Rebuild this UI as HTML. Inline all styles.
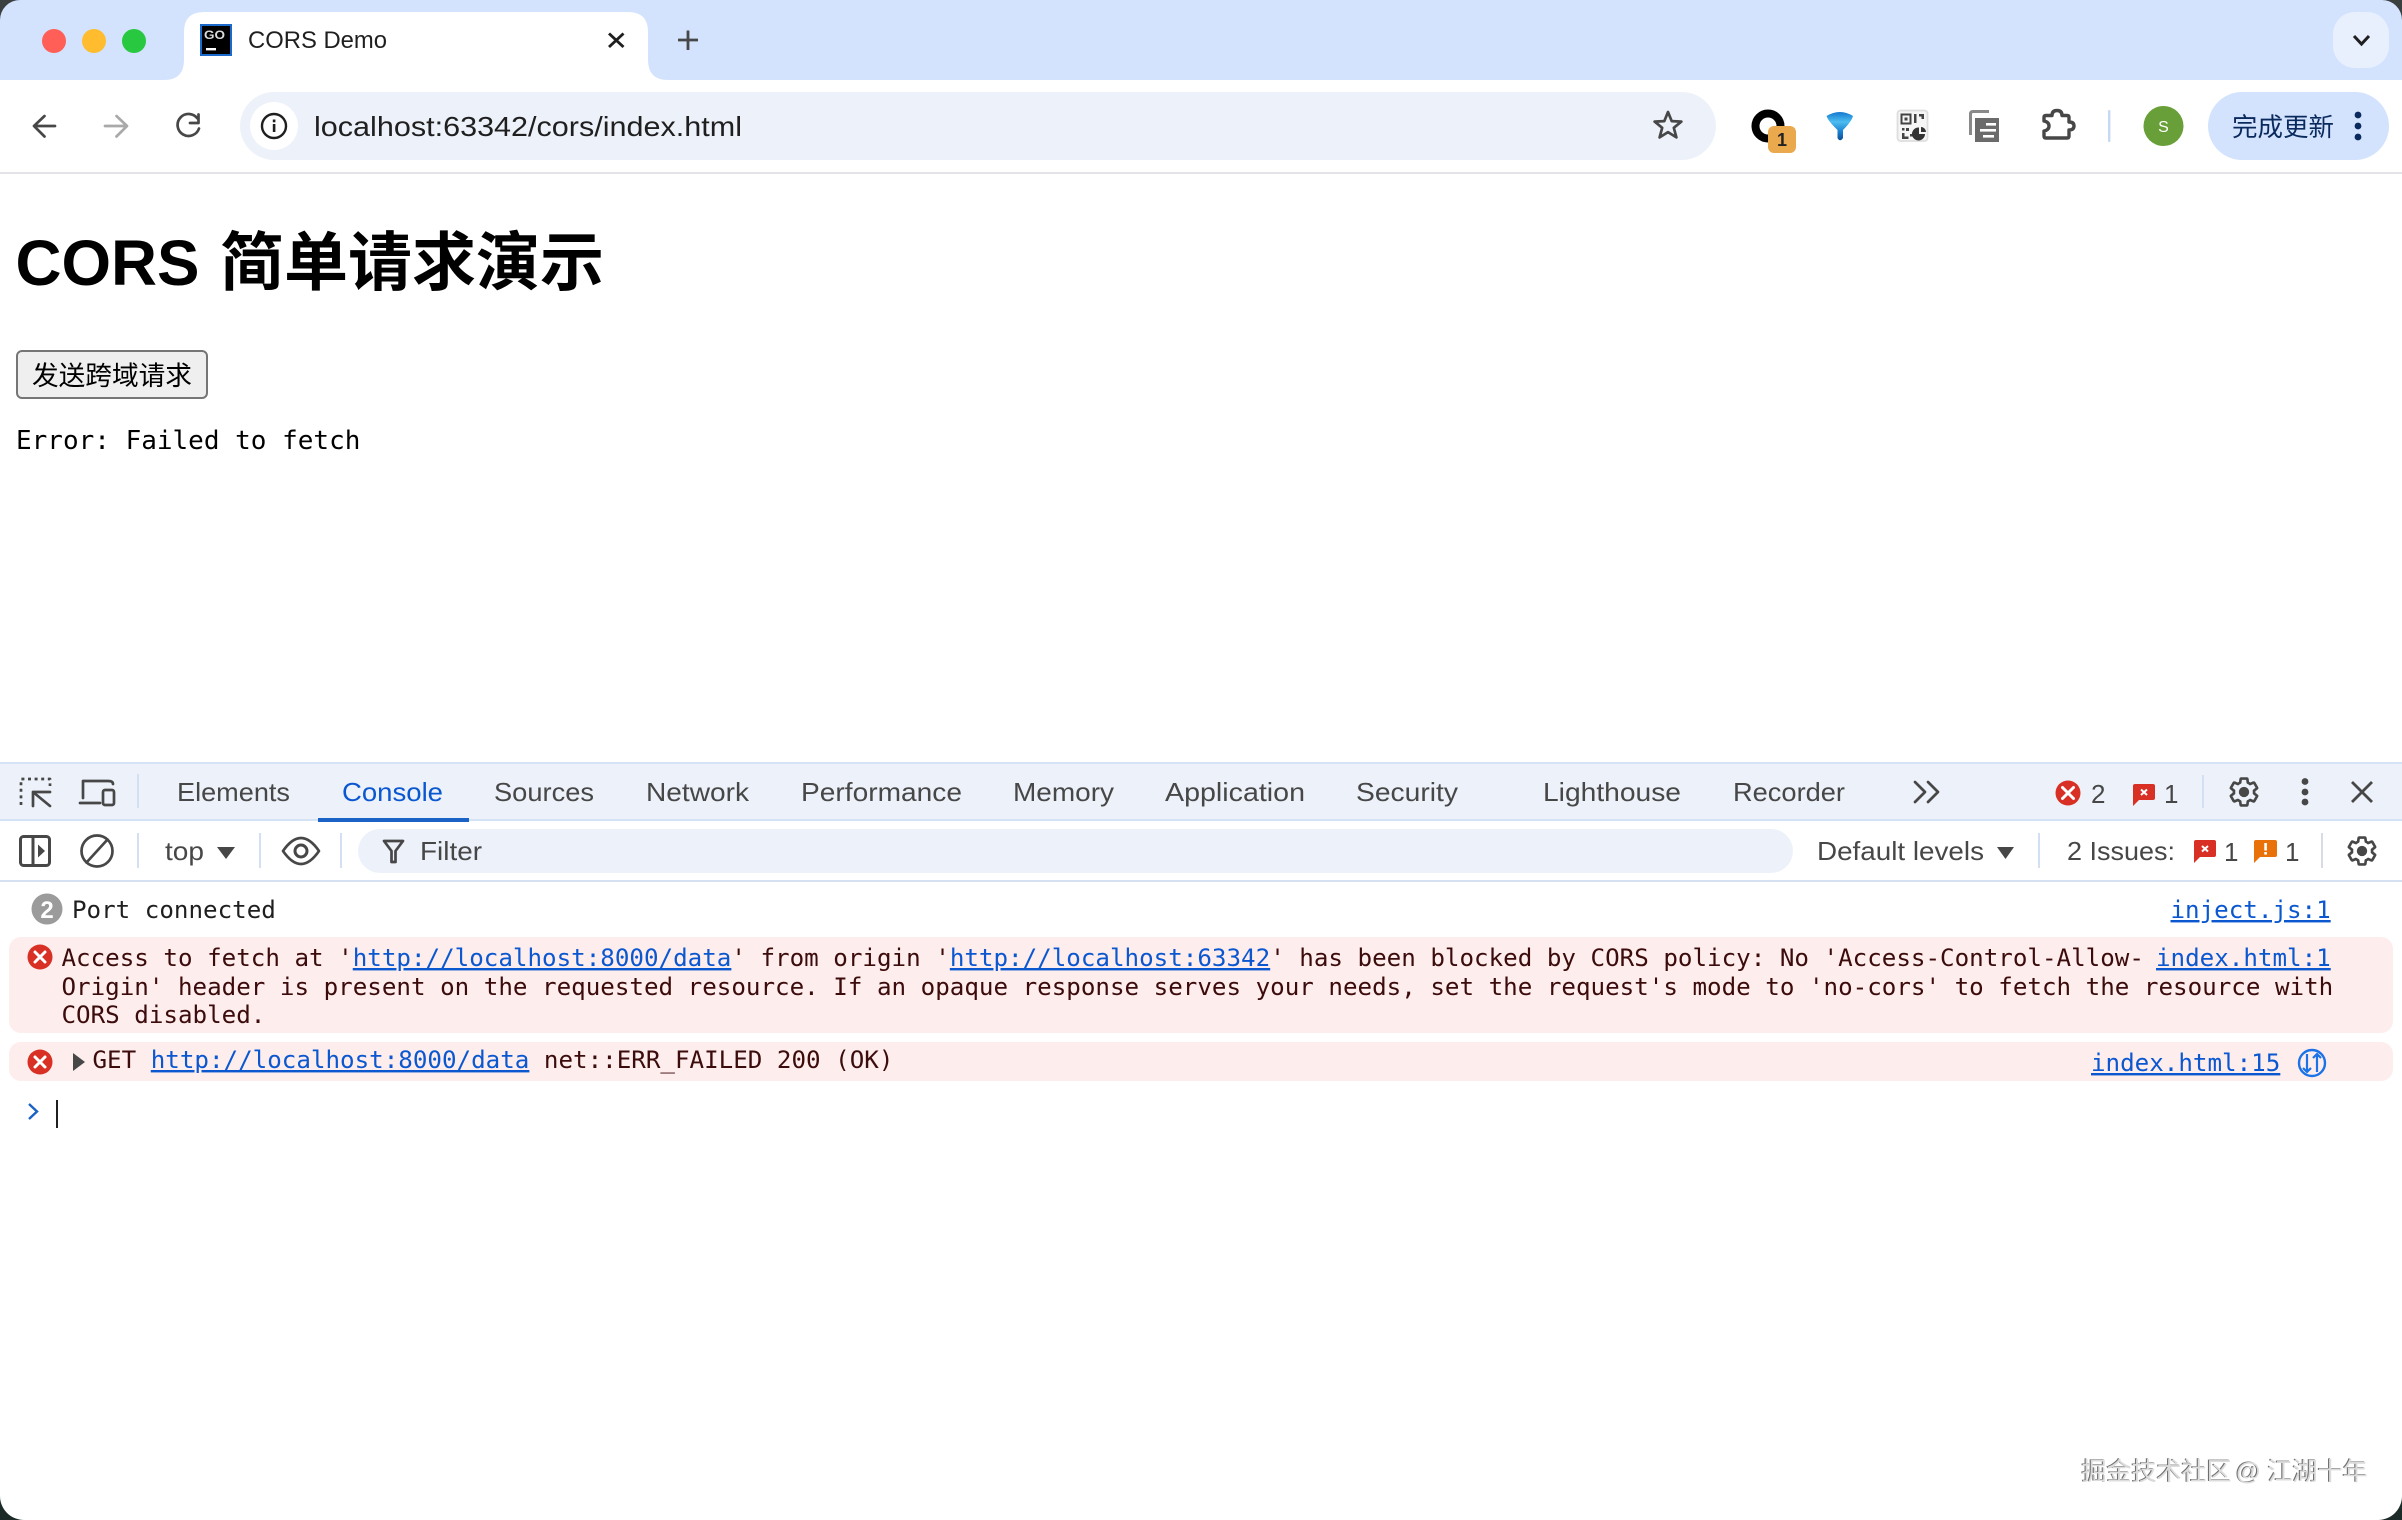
<!DOCTYPE html>
<html lang="zh">
<head>
<meta charset="utf-8">
<title>CORS Demo</title>
<style>
html,body{margin:0;padding:0;background:#fff;width:2402px;height:1520px;overflow:hidden}
svg{display:block}
text{font-family:"Liberation Sans","Noto Sans CJK SC",sans-serif}
.t{font-size:26px;fill:#474747}
.m{font-family:"DejaVu Sans Mono","Liberation Mono",monospace;font-size:24.2px;fill:#1f1f1f}
.e{fill:#3c0b0b}
.l{fill:#0b57d0;text-decoration:underline}
.s{fill:none;stroke:#474747;stroke-width:2.7;stroke-linecap:round;stroke-linejoin:round}
.sep{fill:#d3e0f3}
</style>
</head>
<body>
<svg xmlns="http://www.w3.org/2000/svg" width="2402" height="1520" viewBox="0 0 2402 1520">
<defs>
<g id="gear"><path fill="none" stroke="#474747" stroke-width="1.9" stroke-linejoin="round" d="M19.14 12.94c.04-.3.06-.61.06-.94 0-.32-.02-.64-.07-.94l2.03-1.58a.49.49 0 0 0 .12-.61l-1.92-3.32a.488.488 0 0 0-.59-.22l-2.39.96c-.5-.38-1.03-.7-1.62-.94l-.36-2.54a.484.484 0 0 0-.48-.41h-3.84c-.24 0-.43.17-.47.41l-.36 2.54c-.59.24-1.13.57-1.62.94l-2.39-.96c-.22-.08-.47 0-.59.22L2.74 8.87c-.12.21-.08.47.12.61l2.03 1.58c-.05.3-.09.63-.09.94s.02.64.07.94l-2.03 1.58a.49.49 0 0 0-.12.61l1.92 3.32c.12.22.37.29.59.22l2.39-.96c.5.38 1.03.7 1.62.94l.36 2.54c.05.24.24.41.48.41h3.84c.24 0 .44-.17.47-.41l.36-2.54c.59-.24 1.13-.56 1.62-.94l2.39.96c.22.08.47 0 .59-.22l1.92-3.32c.12-.22.07-.47-.12-.61l-2.01-1.58z"/><circle cx="12" cy="12" r="3.7" fill="#474747"/></g>
<linearGradient id="fn" x1="0" y1="0" x2="0" y2="1"><stop offset="0" stop-color="#1579cf"/><stop offset=".35" stop-color="#4dbdf0"/><stop offset=".7" stop-color="#1a7fd0"/><stop offset="1" stop-color="#0d4f94"/></linearGradient>
</defs>

<!-- Tab strip -->
<rect width="2402" height="80" fill="#d3e3fd"/>
<circle cx="54" cy="41" r="12" fill="#ff5f57"/>
<circle cx="94" cy="41" r="12" fill="#febc2e"/>
<circle cx="134" cy="41" r="12" fill="#28c840"/>

<!-- Toolbar -->
<path d="M0 94Q0 80 14 80H2388Q2402 80 2402 94V172H0Z" fill="#fff"/>
<rect y="172" width="2402" height="2" fill="#e3e4e7"/>

<!-- Active tab -->
<path d="M164 80Q184 80 184 60V32Q184 12 204 12H628Q648 12 648 32V60Q648 80 668 80Z" fill="#fff"/>
<rect x="201" y="25" width="30" height="30" fill="#000" stroke="#1b6ac9" stroke-width="2"/>
<text x="204" y="39" font-size="12" font-weight="700" fill="#ddd" textLength="21" lengthAdjust="spacingAndGlyphs">GO</text>
<rect x="206" y="48" width="10" height="2.4" fill="#fff"/>
<text x="248" y="48" font-size="24" fill="#1f1f1f" textLength="139" lengthAdjust="spacingAndGlyphs">CORS Demo</text>
<path d="M609 33.5L623.5 47M623.5 33.5L609 47" fill="none" stroke="#1f1f1f" stroke-width="2.9"/>
<path d="M688 30.5V50M678 40H698" fill="none" stroke="#474747" stroke-width="2.8"/>

<!-- Tab search chevron -->
<rect x="2333" y="12" width="56" height="56" rx="22" fill="#e8f0fd"/>
<path d="M2354 36L2361.5 44L2369 36" fill="none" stroke="#1f1f1f" stroke-width="3"/>

<!-- Nav buttons -->
<path class="s" d="M55 126H35M44.5 116L34 126L44.5 136.5"/>
<path class="s" style="stroke:#a9a9a9" d="M105 126H126M116.5 116L127 126L116.5 136.5"/>
<path class="s" d="M197.5 118.5A11 11 0 1 0 199 128.5M198.5 114.5V123H190"/>

<!-- Omnibox -->
<rect x="240" y="92" width="1476" height="68" rx="34" fill="#edf2fa"/>
<circle cx="274" cy="126" r="24" fill="#fff"/>
<circle cx="274" cy="126" r="12" fill="none" stroke="#1f1f1f" stroke-width="2.4"/>
<rect x="272.8" y="124" width="2.6" height="8" fill="#1f1f1f"/><rect x="272.8" y="119.5" width="2.6" height="2.8" fill="#1f1f1f"/>
<text x="314" y="136" font-size="28" fill="#1f1f1f" textLength="428" lengthAdjust="spacingAndGlyphs">localhost:63342/cors/index.html</text>
<path class="s" transform="translate(1668 126)" d="M0-14L3.7-4.9L13.4-4.4L5.8 1.8L8.4 11.4L0 6.1L-8.4 11.4L-5.8 1.8L-13.4-4.4L-3.7-4.9Z"/>

<!-- Extensions -->
<circle cx="1768" cy="126" r="12.5" fill="none" stroke="#000" stroke-width="8"/>
<rect x="1768" y="126" width="28" height="27" rx="6" fill="#eba94e"/>
<text x="1782" y="146" font-size="18" font-weight="700" fill="#222" text-anchor="middle">1</text>
<path d="M1826.5 116Q1840 108 1853 116Q1852 121 1843 130V138Q1840 142.500 1837.500 138V130Q1828 121 1826.500 116Z" fill="url(#fn)"/>
<rect x="1897.500" y="110.500" width="30" height="30.500" rx="3" fill="#f6f6f6" stroke="#dedede" stroke-width="1.800"/>
<rect x="1901.500" y="114.500" width="9" height="9" fill="none" stroke="#444" stroke-width="2"/><rect x="1904.500" y="117.500" width="3" height="3" fill="#444"/>
<path d="M1914 114h2.500v9h-2.500zM1919 114h5v2.500h-5zM1921.500 116h2.500v3h-2.500zM1902 128h2.500v2.500h-2.500zM1906 128h3v3h-3zM1902 133h2.500v3.500h4v2.500h-6.500zM1910 134h2.500v2.500h-2.500z" fill="#444"/>
<path d="M1919 127.500a6.500 6.500 0 1 0 6 6.500h-6zM1921 127v5h5a5 5 0 0 0-5-5z" fill="#333"/>
<path d="M1989 111.500H1973Q1970.500 111.500 1970.500 114V135" fill="none" stroke="#8a8a8a" stroke-width="3"/>
<path d="M1975 118H1999V142H1975Z" fill="#6b6b6b"/>
<rect x="1986" y="123" width="10" height="2.600" fill="#fff"/><rect x="1980" y="129" width="16" height="2.600" fill="#fff"/><rect x="1983" y="135" width="11" height="2.600" fill="#fff"/>
<path d="M2046 115.500H2052Q2052 110.500 2057 110.500Q2062 110.500 2062 115.500H2067Q2069 115.500 2069 117.500V122Q2074 122 2074 126Q2074 130 2069 130V136Q2069 138 2067 138H2046Q2044 138 2044 136V131Q2049 130 2049 126Q2049 122 2044 121V117.500Q2044 115.500 2046 115.500Z" fill="none" stroke="#474747" stroke-width="3.400" stroke-linejoin="round"/>
<rect x="2108" y="110" width="2.400" height="32" rx="1" fill="#c7d8f2"/>
<circle cx="2163.500" cy="126" r="20" fill="#689f38"/>
<text x="2163.500" y="132" font-size="16" fill="#fff" text-anchor="middle">S</text>
<rect x="2208" y="92" width="181" height="68" rx="34" fill="#d3e3fd"/>
<text x="2232" y="136" font-size="25.500" fill="#0a2a5e">完成更新</text>
<circle cx="2358" cy="115" r="3.400" fill="#0a2a5e"/><circle cx="2358" cy="126" r="3.400" fill="#0a2a5e"/><circle cx="2358" cy="137" r="3.400" fill="#0a2a5e"/>

<!-- Page -->
<text x="15.500" y="285" font-size="64" font-weight="700" fill="#000" textLength="184" lengthAdjust="spacingAndGlyphs">CORS</text>
<text x="220" y="285" font-size="64" font-weight="700" fill="#000">简单请求演示</text>
<rect x="17" y="351" width="190" height="47" rx="5" fill="#efefef" stroke="#767676" stroke-width="2"/>
<text x="32" y="385" font-size="26.670" fill="#000">发送跨域请求</text>
<text x="16" y="449" style="font-family:'DejaVu Sans Mono',monospace;font-size:26px" fill="#000">Error: Failed to fetch</text>

<!-- DevTools top bar -->
<rect y="762" width="2402" height="58" fill="#edf2fa"/>
<rect y="762" width="2402" height="2" fill="#d6e2f5"/>
<rect y="819" width="2402" height="2" fill="#d3e3f5"/>
<rect x="318" y="818" width="151" height="4" fill="#1a62c5"/>
<path class="s" stroke-dasharray="3 3.600" style="stroke-linecap:butt" d="M21 805V779H50V786"/>
<path class="s" d="M50 792H33V806M33 792L50 806"/>
<path class="s" d="M83 798V781H108Q113 781 113 784M80 803H100"/>
<rect x="103" y="790" width="11" height="15" rx="2" class="s"/>
<rect x="137" y="774" width="2" height="34" class="sep"/>

<text class="t" x="177" y="801" textLength="113" lengthAdjust="spacingAndGlyphs">Elements</text>
<text class="t" style="fill:#0b57d0" x="342" y="801" textLength="101" lengthAdjust="spacingAndGlyphs">Console</text>
<text class="t" x="494" y="801" textLength="100" lengthAdjust="spacingAndGlyphs">Sources</text>
<text class="t" x="646" y="801" textLength="103" lengthAdjust="spacingAndGlyphs">Network</text>
<text class="t" x="801" y="801" textLength="161" lengthAdjust="spacingAndGlyphs">Performance</text>
<text class="t" x="1013" y="801" textLength="101" lengthAdjust="spacingAndGlyphs">Memory</text>
<text class="t" x="1165" y="801" textLength="140" lengthAdjust="spacingAndGlyphs">Application</text>
<text class="t" x="1356" y="801" textLength="102" lengthAdjust="spacingAndGlyphs">Security</text>
<text class="t" x="1543" y="801" textLength="138" lengthAdjust="spacingAndGlyphs">Lighthouse</text>
<text class="t" x="1733" y="801" textLength="112" lengthAdjust="spacingAndGlyphs">Recorder</text>
<path class="s" d="M1915 782L1925 792L1915 802M1928 782L1938 792L1928 802"/>

<circle cx="2068" cy="793" r="12.500" fill="#d93025"/>
<path d="M2062.500 787.500L2073.500 798.500M2073.500 787.500L2062.500 798.500" stroke="#fff" stroke-width="3" stroke-linecap="round"/>
<text class="t" x="2091" y="803">2</text>
<path d="M2135 784H2153Q2155 784 2155 786V798Q2155 800 2153 800H2139L2133 806V786Q2133 784 2135 784Z" fill="#d93025"/>
<path d="M2141 789.500L2147 795M2147 789.500L2141 795" stroke="#fff" stroke-width="2"/>
<text class="t" x="2164" y="803">1</text>
<rect x="2202" y="775" width="2" height="33" class="sep"/>
<use href="#gear" transform="translate(2227.200 775.200) scale(1.400)"/>
<circle cx="2305" cy="781.500" r="3.400" fill="#474747"/><circle cx="2305" cy="792" r="3.400" fill="#474747"/><circle cx="2305" cy="802" r="3.400" fill="#474747"/>
<path d="M2352 782L2372 802M2372 782L2352 802" fill="none" stroke="#474747" stroke-width="2.800"/>

<!-- Console toolbar -->
<rect y="880" width="2402" height="2" fill="#d6e0f3"/>
<rect x="20.500" y="836.500" width="29" height="29" rx="3" fill="none" stroke="#474747" stroke-width="3"/>
<rect x="31.500" y="837" width="3" height="28" fill="#474747"/>
<path d="M38 844.500L45 851L38 857.500Z" fill="#474747"/>
<circle cx="97" cy="851" r="15.500" class="s"/>
<path class="s" d="M86.500 862.500L107.500 839.500"/>
<rect x="137" y="833" width="2" height="35" class="sep"/>
<text class="t" x="165" y="860" textLength="39" lengthAdjust="spacingAndGlyphs">top</text>
<path d="M217 847H235L226 859Z" fill="#474747"/>
<rect x="259" y="833" width="2" height="35" class="sep"/>
<path class="s" d="M283 851Q301 825 319 851Q301 877 283 851Z"/>
<circle cx="301" cy="851" r="6" class="s" style="stroke-width:3"/>
<rect x="340" y="833" width="2" height="35" class="sep"/>
<rect x="358" y="829" width="1435" height="44" rx="22" fill="#edf2fa"/>
<path class="s" d="M384 841H403L395.500 851V862H391.500V851Z"/>
<text class="t" x="420" y="860" textLength="62" lengthAdjust="spacingAndGlyphs">Filter</text>
<text class="t" x="1817" y="860" textLength="167" lengthAdjust="spacingAndGlyphs">Default levels</text>
<path d="M1997 847H2014L2005.500 859Z" fill="#474747"/>
<rect x="2038" y="833" width="2" height="35" class="sep"/>
<text class="t" x="2067" y="860" textLength="108" lengthAdjust="spacingAndGlyphs">2 Issues:</text>
<path d="M2196 840H2214Q2216 840 2216 842V855Q2216 857 2214 857H2200L2194 863V842Q2194 840 2196 840Z" fill="#d93025"/>
<path d="M2202 846L2208 851.500M2208 846L2202 851.500" stroke="#fff" stroke-width="2"/>
<text class="t" x="2224" y="861">1</text>
<path d="M2256 840H2275Q2277 840 2277 842V855Q2277 857 2275 857H2260L2254 863V842Q2254 840 2256 840Z" fill="#e8710a"/>
<rect x="2264.300" y="843" width="2.600" height="7.500" fill="#fff"/><rect x="2264.300" y="852" width="2.600" height="2.600" fill="#fff"/>
<text class="t" x="2285" y="861">1</text>
<rect x="2321" y="833" width="2" height="35" fill="#d8dbe2"/>
<use href="#gear" transform="translate(2345.200 834.200) scale(1.400)"/>

<!-- Console messages -->
<circle cx="47" cy="909" r="15.500" fill="#9b9b9b"/>
<text x="47" y="918" font-size="24" font-weight="700" fill="#fff" text-anchor="middle">2</text>
<text class="m" x="72" y="918">Port connected</text>
<text class="m l" x="2170.500" y="918">inject.js:1</text>

<rect x="9" y="937" width="2384" height="96" rx="12" fill="#fdeded"/>
<circle cx="40" cy="957" r="12.500" fill="#d93025"/>
<path d="M35 952L45 962M45 952L35 962" stroke="#fff" stroke-width="3" stroke-linecap="round"/>
<text class="m e" x="61.500" y="966">Access to fetch at '<tspan class="l">http://localhost:8000/data</tspan>' from origin '<tspan class="l">http://localhost:63342</tspan>' has been blocked by CORS policy: No 'Access-Control-Allow-</text>
<text class="m l" x="2156" y="966">index.html:1</text>
<text class="m e" x="61.500" y="995">Origin' header is present on the requested resource. If an opaque response serves your needs, set the request's mode to 'no-cors' to fetch the resource with</text>
<text class="m e" x="61.500" y="1023">CORS disabled.</text>

<rect x="9" y="1042" width="2384" height="39" rx="12" fill="#fdeded"/>
<circle cx="40" cy="1062" r="12.500" fill="#d93025"/>
<path d="M35 1057L45 1067M45 1057L35 1067" stroke="#fff" stroke-width="3" stroke-linecap="round"/>
<path d="M73 1053L85 1062L73 1071Z" fill="#474747"/>
<text class="m e" x="92.500" y="1068">GET <tspan class="l">http://localhost:8000/data</tspan> net::ERR_FAILED 200 (OK)</text>
<text class="m l" x="2091" y="1071">index.html:15</text>
<circle cx="2312" cy="1063" r="13" fill="none" stroke="#1a73e8" stroke-width="2.400"/>
<path d="M2307 1054V1072M2303 1068L2307 1072L2311 1068M2317 1072V1054M2313 1058L2317 1054L2321 1058" fill="none" stroke="#1a73e8" stroke-width="2.200"/>

<path d="M29 1104L37 1111.500L29 1119" fill="none" stroke="#1a62c5" stroke-width="2.400"/>
<rect x="56" y="1100" width="2" height="28" fill="#1f1f1f"/>

<!-- Watermark -->
<g font-size="25">
<g fill="#6f6f6f" transform="translate(-.5 .3)"><text x="2081" y="1479">掘金技术社区</text><text x="2235" y="1479">@</text><text x="2267" y="1479">江湖十年</text></g>
<g fill="#dcdcdc" transform="translate(.6 1)"><text x="2081" y="1479">掘金技术社区</text><text x="2235" y="1479">@</text><text x="2267" y="1479">江湖十年</text></g>
</g>

<!-- Window corners -->
<path d="M0 0H20A20 20 0 0 0 0 20Z" fill="#3a4040"/>
<path d="M2402 0H2382A20 20 0 0 1 2402 20Z" fill="#3a4040"/>
<path d="M0 1520H24A24 24 0 0 1 0 1496Z" fill="#1d2b28"/>
<path d="M2402 1520H2378A24 24 0 0 0 2402 1496Z" fill="#1d2b28"/>
</svg>
</body>
</html>
